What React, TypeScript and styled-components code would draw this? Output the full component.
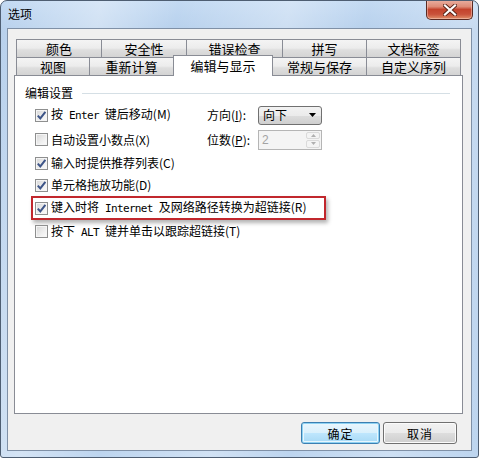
import React from "react";
import styled, { createGlobalStyle, css } from "styled-components";

const CJK = `"Noto Sans CJK SC", "Noto Sans", sans-serif`;

const Global = createGlobalStyle`
  html, body { margin: 0; padding: 0; background: #ffffff; }
  body { font-family: ${CJK}; font-size: 12px; color: #000; }
  * { box-sizing: border-box; }
`;

const Window = styled.div`
  position: relative;
  width: 479px;
  height: 458px;
  border: 1px solid #4e5e72;
  border-radius: 7px 7px 3px 3px;
  padding: 0 6px 6px 6px;
  display: flex;
  flex-direction: column;
  overflow: hidden;
  background:
    linear-gradient(100deg, rgba(255,255,255,0) 0%, rgba(255,255,255,0.35) 18%, rgba(255,255,255,0) 32%, rgba(255,255,255,0.3) 52%, rgba(255,255,255,0) 66%, rgba(255,255,255,0.25) 84%, rgba(255,255,255,0) 100%),
    linear-gradient(180deg, #c3daf3 0%, #b7d0ec 30px, #bdd5ef 100%);
  font-family: ${CJK};
`;

const TitleBar = styled.div`
  height: 27px;
  display: flex;
  align-items: flex-start;
`;

const Title = styled.div`
  padding: 5px 0 0 1px;
  font-size: 12px;
  line-height: 16px;
  color: #000;
`;

const CloseButton = styled.div`
  margin-left: auto;
  margin-right: -1px;
  margin-top: -1px;
  width: 47px;
  height: 20px;
  border: 1px solid #5a2a22;
  border-top: none;
  border-radius: 0 0 5px 5px;
  background: linear-gradient(180deg, #eab0a2 0%, #de8c77 35%, #c4432c 50%, #c9513a 75%, #e08f69 100%);
  box-shadow: inset 0 0 0 1px rgba(255, 220, 210, 0.45);
  display: flex;
  align-items: center;
  justify-content: center;
`;

const Client = styled.div`
  flex: 1;
  border: 1px solid #7f90a6;
  background: #f0f0f0;
  display: flex;
  flex-direction: column;
  padding: 10px 8px 0 6px;
`;

const TabStrip = styled.div`
  display: flex;
  flex-direction: column;
  padding: 0 2px;
`;

const TabRow = styled.div`
  display: flex;
  height: 18px;
`;

const Tab = styled.div<{ $w: number; $active?: boolean }>`
  position: relative;
  width: ${(p) => p.$w}px;
  height: 19px;
  flex: none;
  margin-left: -1px;
  &:first-child { margin-left: 0; }
  border: 1px solid #898c95;
  border-bottom: none;
  background: linear-gradient(180deg, #f4f4f4 0%, #ececec 45%, #dedede 55%, #d2d2d2 100%);
  font-size: 13px;
  line-height: 17px;
  text-align: center;
  color: #000;
  ${(p) =>
    p.$active &&
    css`
      z-index: 2;
      margin-top: -2px;
      height: 21px;
      background: #ffffff;
      line-height: 19px;
    `}
`;

const Panel = styled.div`
  position: relative;
  z-index: 1;
  height: 339px;
  border: 1px solid #898c95;
  background: #ffffff;
  padding: 10px 12px 0 10px;
  display: flex;
  flex-direction: column;
`;

const GroupHeader = styled.div`
  display: flex;
  align-items: center;
  gap: 9px;
  height: 14px;
  font-size: 12px;
  line-height: 14px;
`;

const GroupLine = styled.div`
  flex: 1;
  height: 1px;
  background: #d5dfe5;
  margin-top: 1px;
`;

const Rows = styled.div`
  margin-top: 3px;
  padding-left: 10px;
  display: flex;
  flex-direction: column;
`;

const Row = styled.div<{ $h: number; $highlight?: boolean }>`
  height: ${(p) => p.$h}px;
  display: grid;
  grid-template-columns: 172px 51px 64px;
  align-items: center;
  ${(p) =>
    p.$highlight &&
    css`
      width: 295px;
      margin-left: -4px;
      padding-left: 2px;
      border: 2px solid #c1272d;
      box-shadow: 2px 3px 4px rgba(0, 0, 0, 0.3);
      display: flex;
    `}
`;

const CheckLabel = styled.div`
  display: flex;
  align-items: center;
  gap: 3px;
  white-space: nowrap;
  font-size: 12px;
  line-height: 14px;
`;

const Box = styled.div`
  width: 13px;
  height: 13px;
  flex: none;
  border: 1px solid #8e8f8f;
  background: linear-gradient(135deg, #d6d6d6 0%, #efefef 60%, #fcfcfc 100%);
  box-shadow: inset 0 0 0 1px #f5f5f5;
  display: flex;
  align-items: center;
  justify-content: center;
`;

const Mono = styled.span`
  font-family: "DejaVu Sans Mono", "Liberation Mono", monospace;
  font-size: 11px;
  letter-spacing: -0.65px;
  white-space: pre;
`;

const U = styled.span`
  text-decoration: underline;
`;

const FieldLabel = styled.div`
  font-size: 12px;
  line-height: 14px;
  white-space: nowrap;
`;

const Select = styled.div`
  width: 64px;
  height: 19px;
  border: 1px solid #707070;
  border-radius: 3px;
  background: linear-gradient(180deg, #f2f2f2 0%, #ebebeb 50%, #dddddd 51%, #cfcfcf 100%);
  display: flex;
  align-items: center;
  padding: 0 5px 0 3px;
  font-size: 12px;
  justify-content: space-between;
`;

const SelectText = styled.span`
  padding: 0 1px;
  line-height: 14px;
`;

const Spinner = styled.div`
  width: 64px;
  height: 20px;
  border: 1px solid #b5b5b5;
  background: #f4f4f4;
  display: flex;
  align-items: stretch;
`;

const SpinValue = styled.div`
  flex: 1;
  padding-left: 3px;
  color: #a3a3a3;
  font-family: "Liberation Sans", sans-serif;
  font-size: 12px;
  line-height: 18px;
`;

const SpinButtons = styled.div`
  width: 15px;
  display: flex;
  flex-direction: column;
  gap: 1px;
  padding: 1px 1px 1px 0;
`;

const SpinButton = styled.div`
  flex: 1;
  border: 1px solid #dadada;
  border-radius: 2px;
  background: #f4f4f4;
  display: flex;
  align-items: center;
  justify-content: center;
`;

const Footer = styled.div`
  display: flex;
  justify-content: flex-end;
  gap: 3px;
  padding: 8px 6px 0 0;
`;

const Button = styled.div<{ $w: number; $default?: boolean }>`
  width: ${(p) => p.$w}px;
  height: 22px;
  border: 1px solid #707070;
  border-radius: 3px;
  background: linear-gradient(180deg, #f2f2f2 0%, #ebebeb 50%, #dddddd 51%, #cfcfcf 100%);
  box-shadow: inset 0 0 0 1px #fbfbfb;
  display: flex;
  align-items: center;
  justify-content: center;
  font-size: 12px;
  letter-spacing: 1px;
  ${(p) =>
    p.$default &&
    css`
      border-color: #3c7fb1;
      background: linear-gradient(180deg, #eaf6fd 0%, #d9f0fc 50%, #bee6fd 51%, #a7d9f5 100%);
      box-shadow: inset 0 0 0 1px #8ed2f3, inset 0 0 0 2px #e8f6fd;
    `}
`;

const Check = () => (
  <svg width="11" height="11" viewBox="0 0 11 11">
    <path d="M1.8 5.6 L4.3 8.4 L9.4 1.8" fill="none" stroke="#3e5588" strokeWidth="2" strokeLinejoin="miter" />
  </svg>
);

const CheckBox = ({ checked }: { checked?: boolean }) => <Box>{checked && <Check />}</Box>;

const tabsRow1 = [
  { label: "颜色", w: 86 },
  { label: "安全性", w: 86 },
  { label: "错误检查", w: 97 },
  { label: "拼写", w: 85 },
  { label: "文档标签", w: 95 },
];

const tabsRow2 = [
  { label: "视图", w: 74 },
  { label: "重新计算", w: 85 },
  { label: "编辑与显示", w: 100, active: true },
  { label: "常规与保存", w: 95 },
  { label: "自定义序列", w: 95 },
];

export default function App() {
  return (
    <>
      <Global />
      <Window>
        <TitleBar>
          <Title>选项</Title>
          <CloseButton>
            <svg width="14" height="12" viewBox="0 0 14 12">
              <path d="M2 1.5 L12 10.5 M12 1.5 L2 10.5" stroke="#5a2418" strokeWidth="4" strokeLinecap="square" />
              <path d="M2 1.5 L12 10.5 M12 1.5 L2 10.5" stroke="#ffffff" strokeWidth="2.2" strokeLinecap="square" />
            </svg>
          </CloseButton>
        </TitleBar>
        <Client>
          <TabStrip>
            <TabRow>
              {tabsRow1.map((t) => (
                <Tab key={t.label} $w={t.w}>
                  {t.label}
                </Tab>
              ))}
            </TabRow>
            <TabRow>
              {tabsRow2.map((t) => (
                <Tab key={t.label} $w={t.w} $active={t.active}>
                  {t.label}
                </Tab>
              ))}
            </TabRow>
          </TabStrip>
          <Panel>
            <GroupHeader>
              <span>编辑设置</span>
              <GroupLine />
            </GroupHeader>
            <Rows>
              <Row $h={24}>
                <CheckLabel>
                  <CheckBox checked />
                  <span>
                    按<Mono> Enter </Mono>键后移动(M)
                  </span>
                </CheckLabel>
                <FieldLabel>
                  方向(<U>I</U>):
                </FieldLabel>
                <Select>
                  <SelectText>向下</SelectText>
                  <svg width="7" height="4" viewBox="0 0 7 4">
                    <path d="M0 0 H7 L3.5 4 Z" fill="#000" />
                  </svg>
                </Select>
              </Row>
              <Row $h={25}>
                <CheckLabel>
                  <CheckBox />
                  <span>自动设置小数点(X)</span>
                </CheckLabel>
                <FieldLabel>
                  位数(<U>P</U>):
                </FieldLabel>
                <Spinner>
                  <SpinValue>2</SpinValue>
                  <SpinButtons>
                    <SpinButton>
                      <svg width="5" height="3" viewBox="0 0 5 3">
                        <path d="M0 3 H5 L2.5 0 Z" fill="#b0b0b0" />
                      </svg>
                    </SpinButton>
                    <SpinButton>
                      <svg width="5" height="3" viewBox="0 0 5 3">
                        <path d="M0 0 H5 L2.5 3 Z" fill="#b0b0b0" />
                      </svg>
                    </SpinButton>
                  </SpinButtons>
                </Spinner>
              </Row>
              <Row $h={22}>
                <CheckLabel>
                  <CheckBox checked />
                  <span>输入时提供推荐列表(C)</span>
                </CheckLabel>
              </Row>
              <Row $h={22}>
                <CheckLabel>
                  <CheckBox checked />
                  <span>单元格拖放功能(D)</span>
                </CheckLabel>
              </Row>
              <Row $h={24} $highlight>
                <CheckLabel>
                  <CheckBox checked />
                  <span>
                    键入时将<Mono> Internet </Mono>及网络路径转换为超链接(R)
                  </span>
                </CheckLabel>
              </Row>
              <Row $h={23}>
                <CheckLabel>
                  <CheckBox />
                  <span>
                    按下<Mono> ALT </Mono>键并单击以跟踪超链接(T)
                  </span>
                </CheckLabel>
              </Row>
            </Rows>
          </Panel>
          <Footer>
            <Button $w={79} $default>
              确定
            </Button>
            <Button $w={74}>取消</Button>
          </Footer>
        </Client>
      </Window>
    </>
  );
}
